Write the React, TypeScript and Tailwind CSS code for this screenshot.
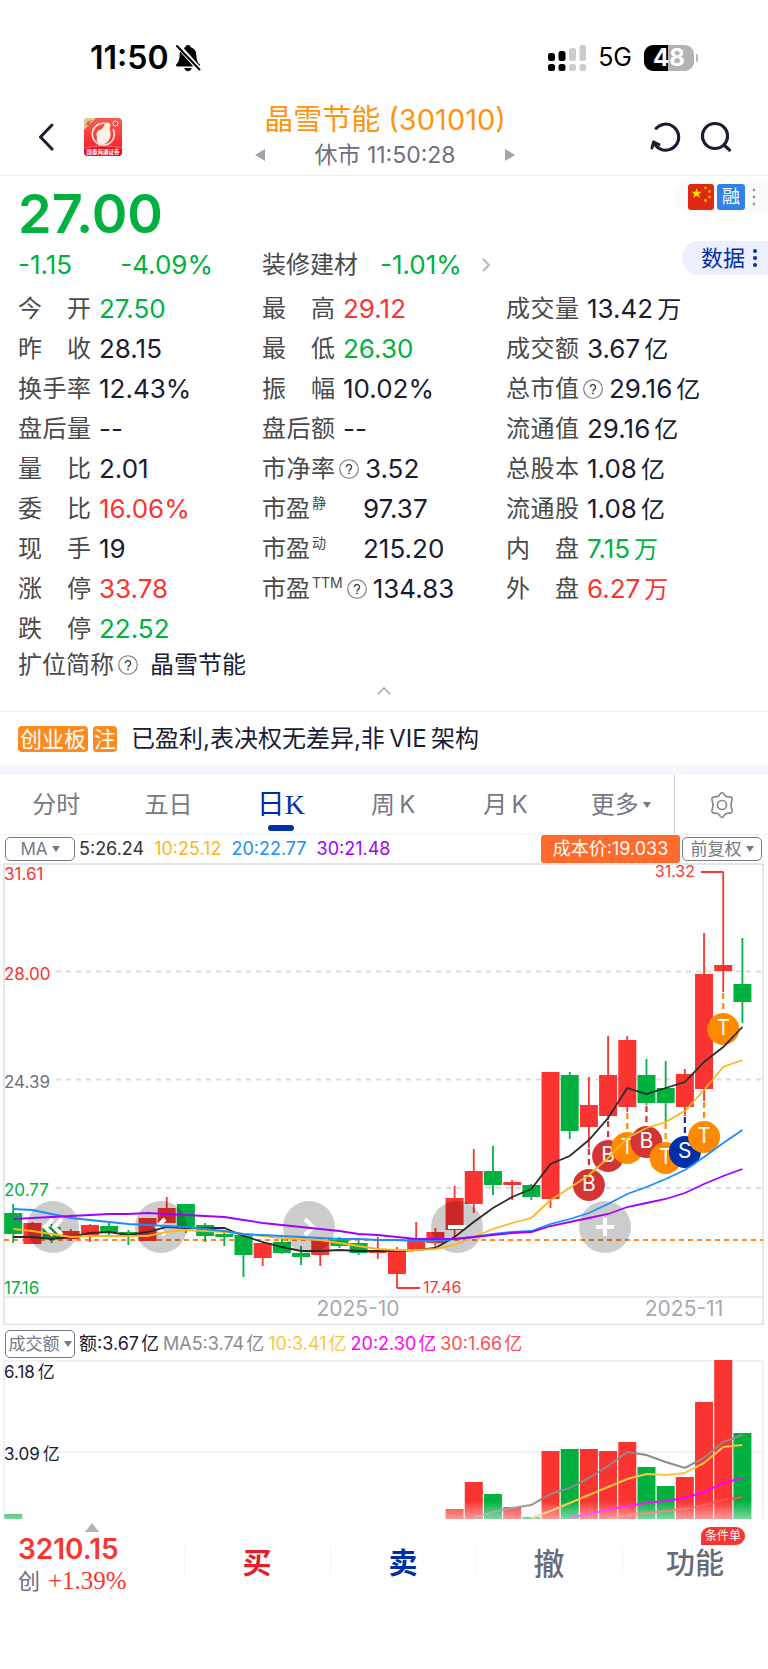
import React, { useState } from "react";

type Tone = "up" | "down" | "flat";

interface Quote {
  label: string;
  value: string;
  unit?: string;
  tone?: Tone;
  sup?: string;
  help?: boolean;
}

const toneClass: Record<Tone, string> = {
  up: "text-[#fa3430]",
  down: "text-[#00b140]",
  flat: "text-[#1a1c33]",
};

const quoteColumns: Quote[][] = [
  [
    { label: "今开", value: "27.50", tone: "down" },
    { label: "昨收", value: "28.15" },
    { label: "换手率", value: "12.43%" },
    { label: "盘后量", value: "--" },
    { label: "量比", value: "2.01" },
    { label: "委比", value: "16.06%", tone: "up" },
    { label: "现手", value: "19" },
    { label: "涨停", value: "33.78", tone: "up" },
    { label: "跌停", value: "22.52", tone: "down" },
  ],
  [
    { label: "最高", value: "29.12", tone: "up" },
    { label: "最低", value: "26.30", tone: "down" },
    { label: "振幅", value: "10.02%" },
    { label: "盘后额", value: "--" },
    { label: "市净率", value: "3.52", help: true },
    { label: "市盈", value: "97.37", sup: "静" },
    { label: "市盈", value: "215.20", sup: "动" },
    { label: "市盈", value: "134.83", sup: "TTM", help: true },
  ],
  [
    { label: "成交量", value: "13.42", unit: "万" },
    { label: "成交额", value: "3.67", unit: "亿" },
    { label: "总市值", value: "29.16", unit: "亿", help: true },
    { label: "流通值", value: "29.16", unit: "亿" },
    { label: "总股本", value: "1.08", unit: "亿" },
    { label: "流通股", value: "1.08", unit: "亿" },
    { label: "内盘", value: "7.15", unit: "万", tone: "down" },
    { label: "外盘", value: "6.27", unit: "万", tone: "up" },
  ],
];

const RED = "#fa3430";
const GREEN = "#00b140";

// [direction, body top, body bottom, wick top, wick bottom]
type Candle = ["r" | "g", number, number, number, number];

const candles: Candle[] = [
  ["g", 1213, 1234, 1204, 1243],
  ["r", 1223, 1244, 1222, 1244],
  ["g", 1227, 1239, 1224, 1243],
  ["r", 1231, 1239, 1229, 1241],
  ["r", 1225, 1235, 1224, 1242],
  ["g", 1226, 1232, 1222, 1235],
  ["g", 1232, 1237, 1230, 1245],
  ["r", 1218, 1241, 1218, 1241],
  ["r", 1208, 1223, 1197, 1223],
  ["g", 1204, 1227, 1204, 1233],
  ["g", 1225, 1236, 1223, 1242],
  ["g", 1234, 1237, 1232, 1246],
  ["g", 1235, 1255, 1235, 1277],
  ["r", 1243, 1258, 1241, 1266],
  ["g", 1242, 1253, 1239, 1254],
  ["g", 1253, 1257, 1246, 1265],
  ["r", 1240, 1255, 1240, 1266],
  ["g", 1240, 1246, 1237, 1248],
  ["g", 1243, 1253, 1241, 1255],
  ["r", 1250, 1253, 1237, 1259],
  ["r", 1251, 1274, 1247, 1288],
  ["r", 1238, 1250, 1222, 1250],
  ["r", 1232, 1243, 1228, 1250],
  ["r", 1198, 1230, 1186, 1237],
  ["r", 1171, 1204, 1149, 1213],
  ["g", 1171, 1185, 1146, 1195],
  ["r", 1182, 1185, 1180, 1200],
  ["g", 1185, 1197, 1184, 1200],
  ["r", 1072, 1199, 1072, 1208],
  ["g", 1075, 1131, 1072, 1139],
  ["r", 1105, 1127, 1077, 1148],
  ["r", 1075, 1116, 1036, 1120],
  ["r", 1040, 1107, 1036, 1112],
  ["g", 1075, 1103, 1059, 1105],
  ["g", 1088, 1103, 1061, 1122],
  ["r", 1074, 1107, 1069, 1116],
  ["r", 974, 1089, 933, 1101],
  ["r", 965, 971, 872, 992],
  ["g", 984, 1002, 938, 1023],
];

const averages = [
  {
    color: "#2b2b2b",
    from: 0,
    points: [1237, 1237, 1239, 1237, 1233, 1232, 1235, 1232, 1227, 1228, 1228, 1228, 1236, 1242, 1247, 1251, 1251, 1250, 1251, 1251, 1251, 1250, 1248, 1237, 1222, 1208, 1197, 1189, 1164, 1156, 1140, 1118, 1088, 1094, 1088, 1082, 1062, 1047, 1027],
  },
  {
    color: "#ffb41f",
    from: 0,
    points: [1229, 1231, 1234, 1237, 1236, 1236, 1236, 1236, 1232, 1230, 1231, 1232, 1234, 1236, 1238, 1239, 1240, 1243, 1246, 1249, 1250, 1250, 1249, 1245, 1237, 1229, 1223, 1218, 1200, 1188, 1175, 1158, 1138, 1128, 1122, 1111, 1090, 1067, 1060],
  },
  {
    color: "#1a8cff",
    from: 0,
    points: [1209, 1210, 1214, 1218, 1220, 1222, 1224, 1225, 1226, 1227, 1229, 1231, 1234, 1235, 1236, 1237, 1238, 1239, 1239, 1240, 1240, 1241, 1241, 1239, 1237, 1234, 1232, 1231, 1224, 1219, 1213, 1204, 1194, 1187, 1179, 1170, 1157, 1143, 1130],
  },
  {
    color: "#a000ff",
    from: 0,
    points: [1219, 1218, 1217, 1216, 1215, 1214, 1214, 1213, 1214, 1215, 1216, 1217, 1220, 1223, 1225, 1227, 1229, 1231, 1234, 1235, 1237, 1239, 1239, 1239, 1237, 1235, 1233, 1232, 1226, 1222, 1218, 1214, 1207, 1203, 1199, 1193, 1184, 1176, 1169],
  },
];

// Trade markers hang below the candle they belong to
const markers = [
  { i: 30, y: 1185, letter: "B", color: "#d33535" },
  { i: 31, y: 1156, letter: "B", color: "#d33535" },
  { i: 32, y: 1148, letter: "T", color: "#ff8a00" },
  { i: 33, y: 1142, letter: "B", color: "#d33535" },
  { i: 34, y: 1158, letter: "T", color: "#ff8a00" },
  { i: 35, y: 1152, letter: "S", color: "#002fa7" },
  { i: 36, y: 1137, letter: "T", color: "#ff8a00" },
  { i: 37, y: 1029, letter: "T", color: "#ff8a00" },
];

const volumes = [
  { i: 0, y: 1514 },
  { i: 23, y: 1509 },
  { i: 24, y: 1482 },
  { i: 25, y: 1494 },
  { i: 26, y: 1507 },
  { i: 27, y: 1517 },
  { i: 28, y: 1451 },
  { i: 29, y: 1449 },
  { i: 30, y: 1449 },
  { i: 31, y: 1451 },
  { i: 32, y: 1442 },
  { i: 33, y: 1467 },
  { i: 34, y: 1486 },
  { i: 35, y: 1477 },
  { i: 36, y: 1402 },
  { i: 37, y: 1360 },
  { i: 38, y: 1433 },
];

const volumeAverages = [
  { color: "#8c8c8c", from: 24, points: [1518, 1512, 1508, 1505, 1494, 1488, 1478, 1466, 1452, 1455, 1462, 1468, 1458, 1442, 1435] },
  { color: "#ffc444", from: 27, points: [1518, 1511, 1503, 1495, 1487, 1479, 1474, 1475, 1473, 1463, 1447, 1445] },
  { color: "#ff00ff", from: 29, points: [1518, 1514, 1510, 1506, 1503, 1501, 1498, 1492, 1483, 1478] },
  { color: "#ff5050", from: 31, points: [1519, 1515, 1513, 1511, 1509, 1505, 1500, 1497] },
];

const cx = (i: number) => 13.2 + i * 19.19;
const toPoints = (from: number, ys: number[]) => ys.map((y, n) => `${cx(from + n)},${y}`).join(" ");

function HelpIcon() {
  return (
    <svg viewBox="0 0 20 20" className="h-5 w-5 shrink-0" aria-hidden="true">
      <circle cx="10" cy="10" r="9.3" fill="none" stroke="#777" strokeWidth="1.1" />
      <path d="M7.4 8.2a2.6 2.6 0 1 1 4 2.1c-.9.6-1.4 1-1.4 2.1" fill="none" stroke="#444" strokeWidth="1.4" />
      <circle cx="10" cy="14.4" r="0.9" fill="#444" />
    </svg>
  );
}

function Caret() {
  return (
    <svg viewBox="0 0 8 6" className="h-1.5 w-2 shrink-0" aria-hidden="true">
      <path d="M0 0h8L4 6z" fill="#777886" />
    </svg>
  );
}

function StatusBar() {
  return (
    <div className="flex h-[94px] items-center pt-[22px] pr-[70px] pl-[90px] text-black">
      <span className="text-[32px] leading-9 font-semibold">11:50</span>
      <svg viewBox="0 0 26 28" className="ml-1.5 h-7 w-[26px]" aria-hidden="true">
        <path d="M13 1c1.500 0 2.400.9 2.600 2.200 3.900 1 5.700 4.200 5.800 8 .1 5 1.400 7 3.100 8.900.9 1 .5 2.400-.9 2.400H2.400c-1.400 0-1.800-1.400-.9-2.400 1.700-1.900 3-3.900 3.100-8.900.1-3.800 1.900-7 5.800-8C10.600 1.900 11.500 1 13 1z" fill="#000" />
        <path d="M9.300 24h7.400c-.4 2-1.900 3.200-3.700 3.200S9.700 26 9.300 24z" fill="#000" />
        <path d="M3 1.500l21.500 24" stroke="#fff" strokeWidth="5" />
        <path d="M2 2l22.500 23.500" stroke="#000" strokeWidth="2" strokeLinecap="round" />
      </svg>
      <svg viewBox="0 0 38 26" className="ml-auto h-[26px] w-[38px]" aria-hidden="true">
        <rect x="0" y="8" width="7" height="8" rx="2.500" />
        <rect x="10.500" y="6" width="7" height="10" rx="2.500" />
        <rect x="21" y="3" width="7" height="13" rx="2.500" fill="#ccc" />
        <rect x="31.500" y="0" width="6.500" height="16" rx="2.500" fill="#ccc" />
        <rect x="0" y="19" width="7" height="7" rx="2.500" />
        <rect x="10.500" y="19" width="7" height="7" rx="2.500" />
        <rect x="21" y="19" width="7" height="7" rx="2.500" fill="#ccc" />
        <rect x="31.500" y="19" width="6.500" height="7" rx="2.500" fill="#ccc" />
      </svg>
      <span className="ml-3 text-[25px]">5G</span>
      <div className="ml-3 flex h-[26px] w-[50px] items-center justify-center rounded-[9px] bg-[linear-gradient(90deg,#000_48%,#b3b3b3_48%)] text-2xl leading-none font-bold text-white">
        48
      </div>
      <div className="ml-0.5 h-2 w-0.5 rounded-r bg-[#b3b3b3]" />
    </div>
  );
}

function BrokerLogo() {
  return (
    <svg viewBox="0 0 38 38" className="h-[38px] w-[38px]" aria-hidden="true">
      <defs>
        <clipPath id="logo-clip">
          <rect width="38" height="38" rx="4" />
        </clipPath>
        <linearGradient id="logo-bg" x1="0" y1="0" x2="0" y2="1">
          <stop offset="0" stopColor="#ff5a4e" />
          <stop offset="1" stopColor="#f8142c" />
        </linearGradient>
      </defs>
      <g clipPath="url(#logo-clip)">
        <rect width="38" height="38" fill="url(#logo-bg)" />
        <path d="M0 0h12L0 12z" fill="#e8c88b" />
        <path d="M2 7.500l5.500-5.500M3.500 3l2.500 2.500M2.500 4.500L5 7" stroke="#7a4514" strokeWidth="0.900" />
        <path d="M22 5.500A11 11 0 1 0 29 11" fill="none" stroke="#ffe9dc" strokeWidth="1.700" />
        <path d="M14.500 12.500c3.200-.4 5.200-3.200 6.500-6.500 1-2.300 5.600-2 5.300 1.300-.1 2-.8 3.400-.4 5 2 4.900.1 11.400-4.900 13.400-2.400 1-5.800.9-7-1.100-1.300-1.400-1.600-4-1-5.400-1-2.300-.6-5.900 1.500-6.700z" fill="#fff3e6" />
        <circle cx="31.500" cy="5.500" r="2.500" fill="none" stroke="#fff" strokeWidth="1" />
        <path d="M0 30q19-4 38 0v8H0z" fill="#e90f26" />
        <path d="M0 30q19-4 38 0" fill="none" stroke="#ff9a8c" strokeWidth="0.700" />
        <text x="19" y="36" fontSize="5.500" fontWeight="700" fill="#fff" textAnchor="middle">国泰海通证券</text>
      </g>
    </svg>
  );
}

function Header() {
  return (
    <header className="flex h-[82px] items-center border-b border-[#f0f0f2] pr-9 pl-[38px]">
      <div className="flex w-[220px] items-center gap-[30px] pt-1">
        <button type="button" aria-label="返回">
          <svg viewBox="0 0 16 28" className="h-7 w-4" fill="none" stroke="#1a1c33" strokeWidth="3" strokeLinecap="round" strokeLinejoin="round">
            <path d="M14 2L2.500 14 14 26" />
          </svg>
        </button>
        <BrokerLogo />
      </div>
      <div className="flex flex-1 flex-col items-center pt-1">
        <h1 className="text-[29px] leading-9 whitespace-nowrap text-[#ff930f]">晶雪节能 (301010)</h1>
        <div className="flex w-[260px] items-center justify-between text-[#6f7080]">
          <button type="button" aria-label="上一只">
            <svg viewBox="0 0 10 12" className="h-3 w-2.5"><path d="M10 0v12L0 6z" fill="#a0a2ad" /></svg>
          </button>
          <p className="text-[23px] leading-[34px]">休市 11:50:28</p>
          <button type="button" aria-label="下一只">
            <svg viewBox="0 0 10 12" className="h-3 w-2.5"><path d="M0 0v12l10-6z" fill="#a0a2ad" /></svg>
          </button>
        </div>
      </div>
      <div className="flex w-[220px] items-center justify-end gap-[18px] pt-1">
        <button type="button" aria-label="刷新">
          <svg viewBox="0 0 32 32" className="h-8 w-8" fill="none" stroke="#1a1c33" strokeWidth="3" strokeLinecap="round" strokeLinejoin="round">
            <path d="M6 7.500A13 13 0 1 1 10 27.800c-3-1.300-5-3.600-6-6.600" />
            <path d="M2 27l1.500-6 5.500 2.500" />
          </svg>
        </button>
        <button type="button" aria-label="搜索">
          <svg viewBox="0 0 32 32" className="h-8 w-8" fill="none" stroke="#1a1c33" strokeWidth="3.200" strokeLinecap="round">
            <circle cx="15" cy="15" r="12.500" />
            <path d="M24 24l5.500 5" />
          </svg>
        </button>
      </div>
    </header>
  );
}

function QuoteRow({ label, value, unit, tone = "flat", sup, help }: Quote) {
  return (
    <div className="flex h-10 items-center whitespace-nowrap">
      <dt className="flex items-center">
        {sup ? (
          <span className={help ? "flex items-center" : "flex w-[93px] items-center"}>
            {label}
            <sup className="top-0 ml-0.5 self-start pt-0.5 text-sm leading-4">{sup}</sup>
          </span>
        ) : (
          <span className="flex w-[73px] justify-between">
            {label.split("").map((c) => (
              <span key={c}>{c}</span>
            ))}
          </span>
        )}
        {help && <span className="ml-1"><HelpIcon /></span>}
      </dt>
      <dd className={`text-[26px] ${help ? "ml-1.5" : "ml-2"} ${toneClass[tone]}`}>
        {value}
        {unit && <span className="ml-1 text-2xl leading-8">{unit}</span>}
      </dd>
    </div>
  );
}

function QuotePanel() {
  return (
    <section className="text-2xl leading-8 text-[#4a4a4a]">
      <div className="flex h-[65px] items-start justify-between pl-[18px]">
        <p className="pt-1.5 text-[54px] leading-[64px] font-semibold text-[#00b140]">27.00</p>
        <div className="mt-[5px] flex h-8 items-center gap-[3px] rounded-l-full bg-[#fafafa] pr-3 pl-3.5">
          <svg viewBox="0 0 26 26" className="h-[26px] w-[26px]" aria-hidden="true">
            <rect width="26" height="26" rx="3" fill="#de2910" />
            <path d="M8.500 4l1.300 3.700h3.900l-3.100 2.300 1.200 3.700-3.300-2.300-3.200 2.300 1.200-3.700L3.400 7.700h3.900z" fill="#ffde00" />
            <circle cx="17.500" cy="3.800" r="1.400" fill="#ffb400" />
            <circle cx="21.500" cy="7.500" r="1.400" fill="#ffb400" />
            <circle cx="21.500" cy="13" r="1.400" fill="#ffb400" />
            <circle cx="17.500" cy="16.500" r="1.400" fill="#ffb400" />
          </svg>
          <span className="flex h-[26px] w-7 items-center justify-center rounded-[3px] bg-[#2f82e8] text-lg leading-none text-white">融</span>
          <svg viewBox="0 0 4 18" className="ml-1 h-[18px] w-1" fill="#999" aria-hidden="true">
            <circle cx="2" cy="2" r="1.400" />
            <circle cx="2" cy="9" r="1.400" />
            <circle cx="2" cy="16" r="1.400" />
          </svg>
        </div>
      </div>

      <div className="flex h-12 items-center pl-[18px]">
        <p className="flex w-[244px] gap-12 text-[26px] text-[#00b140]">
          <span>-1.15</span>
          <span>-4.09%</span>
        </p>
        <a href="#sector" className="flex items-center">
          <span>装修建材</span>
          <span className="ml-[22px] text-[26px] text-[#00b140]">-1.01%</span>
          <svg viewBox="0 0 8 14" className="ml-5 h-3.5 w-2" fill="none" stroke="#b5b5b5" strokeWidth="1.800">
            <path d="M1 1l6 6-6 6" />
          </svg>
        </a>
        <button type="button" className="ml-auto flex h-[34px] items-center gap-2 self-start rounded-l-full bg-[#ebeffe] pr-[11px] pl-[19px] text-[22px] text-[#002fa7]">
          数据
          <svg viewBox="0 0 4 18" className="h-[18px] w-1" fill="#002fa7" aria-hidden="true">
            <circle cx="2" cy="2" r="2" />
            <circle cx="2" cy="9" r="2" />
            <circle cx="2" cy="16" r="2" />
          </svg>
        </button>
      </div>

      <div className="grid grid-cols-3 px-[18px]">
        {quoteColumns.map((column, n) => (
          <dl key={n}>
            {column.map((row) => (
              <QuoteRow key={row.label + row.value} {...row} />
            ))}
          </dl>
        ))}
      </div>

      <div className="flex h-8 items-center px-[18px]">
        <span className="mr-1">扩位简称</span>
        <HelpIcon />
        <span className="ml-3 text-[#1a1c33]">晶雪节能</span>
      </div>
      <button type="button" aria-label="收起" className="flex h-[30px] w-full justify-center pt-1.5">
        <svg viewBox="0 0 14 8" className="h-2 w-3.5" fill="none" stroke="#b5b5b5" strokeWidth="1.800">
          <path d="M1 7l6-6 6 6" />
        </svg>
      </button>
    </section>
  );
}

function KLineChart() {
  const controls = [
    { name: "最早", left: "left-[6.9%]", path: "M11 3L3 11l8 8M20 3l-8 8 8 8" },
    { name: "左移", left: "left-[21%]", path: "M15 3l-8 8 8 8" },
    { name: "右移", left: "left-[40.2%]", path: "M7 3l8 8-8 8" },
    { name: "缩小", left: "left-[59.5%]", path: "M2 11h18" },
    { name: "放大", left: "left-[78.8%]", path: "M2 11h18M11 2v18" },
  ];

  return (
    <div className="relative">
      <svg viewBox="0 863 768 462" className="block w-full" aria-label="日K线图">
        <path d="M4 864h759v460.500H4z" fill="none" stroke="#dcdfe4" strokeWidth="1.500" />
        <path d="M4 1297h759" stroke="#e4e6ea" strokeWidth="1.500" />
        {[971.5, 1079.5, 1188].map((y) => (
          <path key={y} d={`M56 ${y}H763`} stroke="#d9dce0" strokeWidth="1.800" strokeDasharray="5 5" />
        ))}
        <path d="M4 1240h759" stroke="#ff8a1e" strokeWidth="1.800" strokeDasharray="5 4" />
        {candles.map(([dir, top, bottom, high, low], i) => {
          const color = dir === "r" ? RED : GREEN;
          return (
            <g key={i} fill={color}>
              <rect x={cx(i) - 0.9} y={high} width="1.8" height={low - high} />
              <rect x={cx(i) - 9} y={top} width="18" height={bottom - top} />
            </g>
          );
        })}
        <path d="M701 872h22.500M397 1288h23" fill="none" stroke={RED} strokeWidth="1.800" />
        <g fontSize="16" fill={RED}>
          <text x="695" y="877" textAnchor="end">31.32</text>
          <text x="423" y="1293">17.46</text>
        </g>
        <g fontSize="17">
          <text x="4" y="880" fill={RED}>31.61</text>
          <text x="4" y="980" fill={RED}>28.00</text>
          <text x="4" y="1088" fill="#6f7080">24.39</text>
          <text x="4" y="1196" fill={GREEN}>20.77</text>
          <text x="4" y="1294" fill={GREEN}>17.16</text>
        </g>
        <g fontSize="21" fill="#a8a8b0" textAnchor="middle">
          <text x="358" y="1316">2025-10</text>
          <text x="684" y="1316">2025-11</text>
        </g>
      </svg>

      {controls.map((control) => (
        <button
          key={control.name}
          type="button"
          aria-label={control.name}
          className={`absolute top-[78.7%] flex h-[52px] w-[52px] -translate-x-1/2 -translate-y-1/2 items-center justify-center rounded-full bg-black/20 ${control.left}`}
        >
          <svg viewBox="0 0 22 22" className="h-[22px] w-[22px]" fill="none" stroke="#fff" strokeWidth="4">
            <path d={control.path} />
          </svg>
        </button>
      ))}

      <svg viewBox="0 863 768 462" className="pointer-events-none absolute inset-0 w-full" aria-hidden="true">
        {markers.map(({ i, y, letter, color }) => (
          <g key={i}>
            <path d={`M${cx(i)} ${candles[i][4] + 1}V${y - 16}`} stroke={color} strokeWidth="2.200" strokeDasharray="6 4" />
            <circle cx={cx(i)} cy={y} r="16" fill={color} />
            <text x={cx(i)} y={y + 6} fontSize="21" fill="#fff" textAnchor="middle">{letter}</text>
          </g>
        ))}
        {averages.map(({ color, from, points }) => (
          <polyline key={color} points={toPoints(from, points)} fill="none" stroke={color} strokeWidth="1.800" />
        ))}
      </svg>
    </div>
  );
}

function VolumeChart() {
  return (
    <svg viewBox="0 1360 768 159" className="block w-full" aria-label="成交额">
      <defs>
        <linearGradient id="volume-fade" x1="0" y1="0" x2="0" y2="1">
          <stop offset="0" stopColor="#fbfcff" stopOpacity="0" />
          <stop offset="1" stopColor="#fbfcff" stopOpacity="0.5" />
        </linearGradient>
      </defs>
      <path d="M4 1519v-158h759v158M4 1452h759" fill="none" stroke="#ebedf0" strokeWidth="1.500" />
      {volumes.map(({ i, y }) => (
        <rect key={i} x={cx(i) - 9} y={y} width="18" height={1519 - y} fill={candles[i][0] === "r" ? RED : GREEN} />
      ))}
      {volumeAverages.map(({ color, from, points }) => (
        <polyline key={color} points={toPoints(from, points)} fill="none" stroke={color} strokeWidth="2" />
      ))}
      <rect x="0" y="1501" width="768" height="18" fill="url(#volume-fade)" />
      <g fontSize="17" fill="#1a1c33">
        <text x="4" y="1378">6.18<tspan dx="3">亿</tspan></text>
        <text x="4" y="1460">3.09<tspan dx="3">亿</tspan></text>
      </g>
    </svg>
  );
}

function BottomBar() {
  const divider = "relative flex-1 before:absolute before:top-7 before:left-0 before:h-7 before:w-px before:bg-[#f3f4f8]";
  return (
    <nav className="flex h-[90px] text-[29px] leading-[88px] font-medium">
      <a href="#index" className="flex w-[184px] flex-col pl-[18px]">
        <svg viewBox="0 0 14 9" className="mt-1 mb-px ml-[67px] h-[9px] w-3.5" aria-hidden="true">
          <path d="M7 0l7 9H0z" fill="#b3b3b3" />
        </svg>
        <span className="text-[28px] leading-8 font-semibold text-[#fa3430]">3210.15</span>
        <span className="flex items-center gap-2 text-[22px] leading-8 font-normal text-[#6f7080]">
          创
          <span className="font-['Liberation_Serif'] text-[25px] leading-8 text-[#fa3430]">+1.39%</span>
        </span>
      </a>
      <button type="button" className={`${divider} font-bold text-[#e0202c]`}>买</button>
      <button type="button" className={`${divider} font-bold text-[#002fa7]`}>卖</button>
      <button type="button" className={`${divider} text-[31px] text-[#6a6b7a]`}>撤</button>
      <button type="button" className={`${divider} text-[#6a6b7a]`}>
        功能
        <span className="absolute top-2 right-[23px] flex h-[18px] w-11 items-center justify-center rounded-[9px] rounded-bl-none bg-[#fa3430] text-xs leading-none font-normal text-white">
          条件单
        </span>
      </button>
    </nav>
  );
}

function Turnover({ label, color }: { label: string; color: string }) {
  return (
    <span className={color}>
      {label}
      <span className="ml-0.5">亿</span>
    </span>
  );
}

export default function App() {
  const [activeTab, setActiveTab] = useState("日K");
  const tabs = ["分时", "五日", "日K", "周\u2009K", "月\u2009K", "更多"];

  return (
    <main className="min-h-screen bg-white font-[Inter,'Noto_Sans_CJK_SC',sans-serif]">
      <StatusBar />
      <Header />
      <QuotePanel />

      {/* Board notice */}
      <div className="flex h-[54px] items-center border-t border-[#eeeff2] pl-[18px] text-[23px] leading-8 text-[#1a1c33]">
        <span className="flex h-[26px] items-center rounded bg-[#ff8a1e] px-0.5 text-[22px] text-white">创业板</span>
        <span className="ml-[5px] flex h-[26px] items-center rounded bg-[#ff8a1e] px-px text-[22px] text-white">注</span>
        <p className="ml-3.5 text-2xl leading-8 whitespace-nowrap">已盈利,表决权无差异,非{"\u2009"}VIE{"\u2009"}架构</p>
      </div>
      <div className="h-2.5 bg-[#f4f6fb]" />

      {/* Period tabs */}
      <div className="flex h-[60px] border-b border-[#f0f1f4]">
        <div role="tablist" className="flex flex-1">
          {tabs.map((tab) => {
            const active = tab === activeTab;
            return (
              <button
                key={tab}
                type="button"
                role="tab"
                aria-selected={active}
                onClick={() => setActiveTab(tab)}
                className={`relative flex flex-1 items-center justify-center gap-1 ${
                  active
                    ? "font-['Liberation_Serif','Noto_Sans_CJK_SC',serif] text-[28px] text-[#002fa7]"
                    : "text-2xl text-[#777886]"
                }`}
              >
                {tab === "更多" ? <span className="ml-1.5">{tab}</span> : tab}
                {tab === "更多" && <Caret />}
                {active && <span className="absolute bottom-[3px] h-1.5 w-[26px] rounded-full bg-[#002fa7]" />}
              </button>
            );
          })}
        </div>
        <button type="button" aria-label="设置" className="flex w-[94px] items-center justify-center border-l border-[#ccced4]">
          <svg viewBox="0 0 26 28" className="h-7 w-[26px]" fill="none" stroke="#8a8a8e" strokeWidth="1.700" strokeLinejoin="round">
            <path d="M13 1.500c1.500 0 2.500 3 4 3.800 1.500.9 4.600.3 5.900 1.400 1.100 1.300-.9 3.800-.9 7.300s2 6 .9 7.300c-1.300 1.100-4.400.5-5.900 1.400-1.500.8-2.500 3.800-4 3.800s-2.500-3-4-3.800c-1.500-.9-4.600-.3-5.900-1.400C2 20 4 17.500 4 14S2 8 3.100 6.700C4.400 5.600 7.500 6.200 9 5.300c1.500-.8 2.500-3.800 4-3.800z" />
            <circle cx="13" cy="14" r="4.500" />
          </svg>
        </button>
      </div>

      {/* Moving averages */}
      <div className="flex h-7 items-center pr-1.5 pl-[5px] text-[18px] leading-6 whitespace-nowrap">
        <button type="button" className="mr-1 flex h-6 w-[70px] items-center justify-center gap-1 rounded-[5px] border border-[#777886] text-[17px] text-[#777886]">
          MA
          <Caret />
        </button>
        <span className="text-[#333]">5:26.24</span>
        <span className="ml-2.5 text-[#ffb41f]">10:25.12</span>
        <span className="ml-2.5 text-[#1a8cff]">20:22.77</span>
        <span className="ml-2.5 text-[#a000ff]">30:21.48</span>
        <span className="ml-auto flex h-7 w-[139px] items-center justify-center rounded-[3px] bg-[#ff6b2d] text-white">成本价:19.033</span>
        <button type="button" className="ml-0.5 flex h-6 w-20 items-center justify-center gap-1 rounded-[5px] border border-[#777886] text-[17px] text-[#777886]">
          前复权
          <Caret />
        </button>
      </div>
      <KLineChart />

      {/* Turnover */}
      <div className="flex h-[35px] items-center gap-1 pt-0.5 pl-[5px] text-[18px] leading-6 whitespace-nowrap">
        <button type="button" className="flex h-7 w-[70px] items-center justify-center gap-1 rounded-[5px] border border-[#777886] text-[17px] text-[#777886]">
          成交额
          <Caret />
        </button>
        <Turnover label="额:3.67" color="text-[#1a1c33]" />
        <Turnover label="MA5:3.74" color="text-[#8c8c8c]" />
        <Turnover label="10:3.41" color="text-[#ffc444]" />
        <Turnover label="20:2.30" color="text-[#ff00ff]" />
        <Turnover label="30:1.66" color="text-[#ff5050]" />
      </div>
      <VolumeChart />
      <BottomBar />
    </main>
  );
}
